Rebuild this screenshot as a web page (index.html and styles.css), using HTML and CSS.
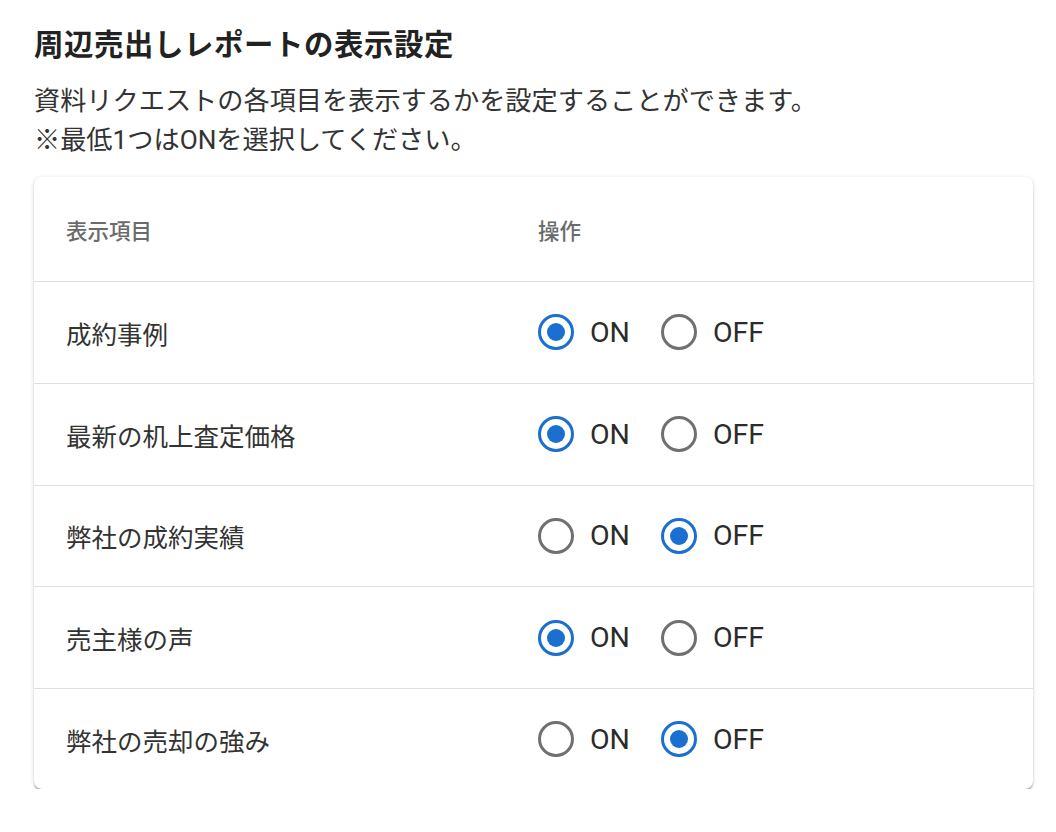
FILE: index.html
```html
<!DOCTYPE html>
<html lang="ja">
<head>
<meta charset="utf-8">
<title>周辺売出しレポートの表示設定</title>
<link rel="stylesheet" href="styles.css">
</head>
<body>
<div class="page">
  <h1 class="title">周辺売出しレポートの表示設定</h1>
  <p class="desc">資料リクエストの各項目を表示するかを設定することができます。<br>※最低1つはONを選択してください。</p>
  <div class="card">
    <div class="row head">
      <div class="cell name">表示項目</div>
      <div class="cell op">操作</div>
    </div>
    <div class="row">
      <div class="cell name">成約事例</div>
      <div class="cell op">
        <label class="opt"><span class="radio on"></span><span class="lbl">ON</span></label>
        <label class="opt"><span class="radio"></span><span class="lbl">OFF</span></label>
      </div>
    </div>
    <div class="row">
      <div class="cell name">最新の机上査定価格</div>
      <div class="cell op">
        <label class="opt"><span class="radio on"></span><span class="lbl">ON</span></label>
        <label class="opt"><span class="radio"></span><span class="lbl">OFF</span></label>
      </div>
    </div>
    <div class="row">
      <div class="cell name">弊社の成約実績</div>
      <div class="cell op">
        <label class="opt"><span class="radio"></span><span class="lbl">ON</span></label>
        <label class="opt"><span class="radio on"></span><span class="lbl">OFF</span></label>
      </div>
    </div>
    <div class="row">
      <div class="cell name">売主様の声</div>
      <div class="cell op">
        <label class="opt"><span class="radio on"></span><span class="lbl">ON</span></label>
        <label class="opt"><span class="radio"></span><span class="lbl">OFF</span></label>
      </div>
    </div>
    <div class="row last">
      <div class="cell name">弊社の売却の強み</div>
      <div class="cell op">
        <label class="opt"><span class="radio"></span><span class="lbl">ON</span></label>
        <label class="opt"><span class="radio on"></span><span class="lbl">OFF</span></label>
      </div>
    </div>
  </div>
</div>
</body>
</html>
```

FILE: styles.css
```css
* { box-sizing: border-box; }
html, body { margin: 0; padding: 0; background: #fff; }
body {
  font-family: Roboto, "Noto Sans CJK JP", sans-serif;
  color: #2b2b2b;
}
.page {
  padding: 25px 23px 0 34px;
}
.title {
  margin: 0;
  font-size: 29.4px;
  line-height: 40px;
  font-weight: 700;
  color: #222;
  letter-spacing: 0.6px;
}
.desc {
  margin: 17px 0 0 0;
  font-size: 26.2px;
  line-height: 39px;
  color: #333;
}
.card {
  margin-top: 17px;
  width: 999px;
  background: #fff;
  border-radius: 8px;
  box-shadow: 0 3px 2px -1px rgba(0,0,0,0.28), 0 1px 2px 0 rgba(0,0,0,0.14), 0 1px 5px 0 rgba(0,0,0,0.12);
  overflow: hidden;
}
.row {
  display: grid;
  grid-template-columns: 502px 1fr;
  align-items: center;
  height: 101.8px;
  border-bottom: 1px solid #e0e0e0;
}
.row.head { height: 105px; }
.row.last { border-bottom: none; height: 100px; }
.cell.name {
  padding-left: 32px;
  font-size: 25.5px;
  color: #333;
}
.head .cell {
  font-size: 21.5px;
  font-weight: 500;
  color: #6b6b6b;
}
.cell.op {
  display: flex;
  align-items: center;
  gap: 31px;
  padding-left: 2px;
}
.opt {
  display: flex;
  align-items: center;
  gap: 16px;
}
.radio {
  width: 36px;
  height: 36px;
  border-radius: 50%;
  border: 3.8px solid #707070;
  display: flex;
  align-items: center;
  justify-content: center;
}
.radio.on { border-color: #1a6fd1; }
.radio.on::after {
  content: "";
  width: 18px;
  height: 18px;
  border-radius: 50%;
  background: #1a6fd1;
}
.lbl {
  font-size: 28.5px;
  color: #2b2b2b;
}
```
